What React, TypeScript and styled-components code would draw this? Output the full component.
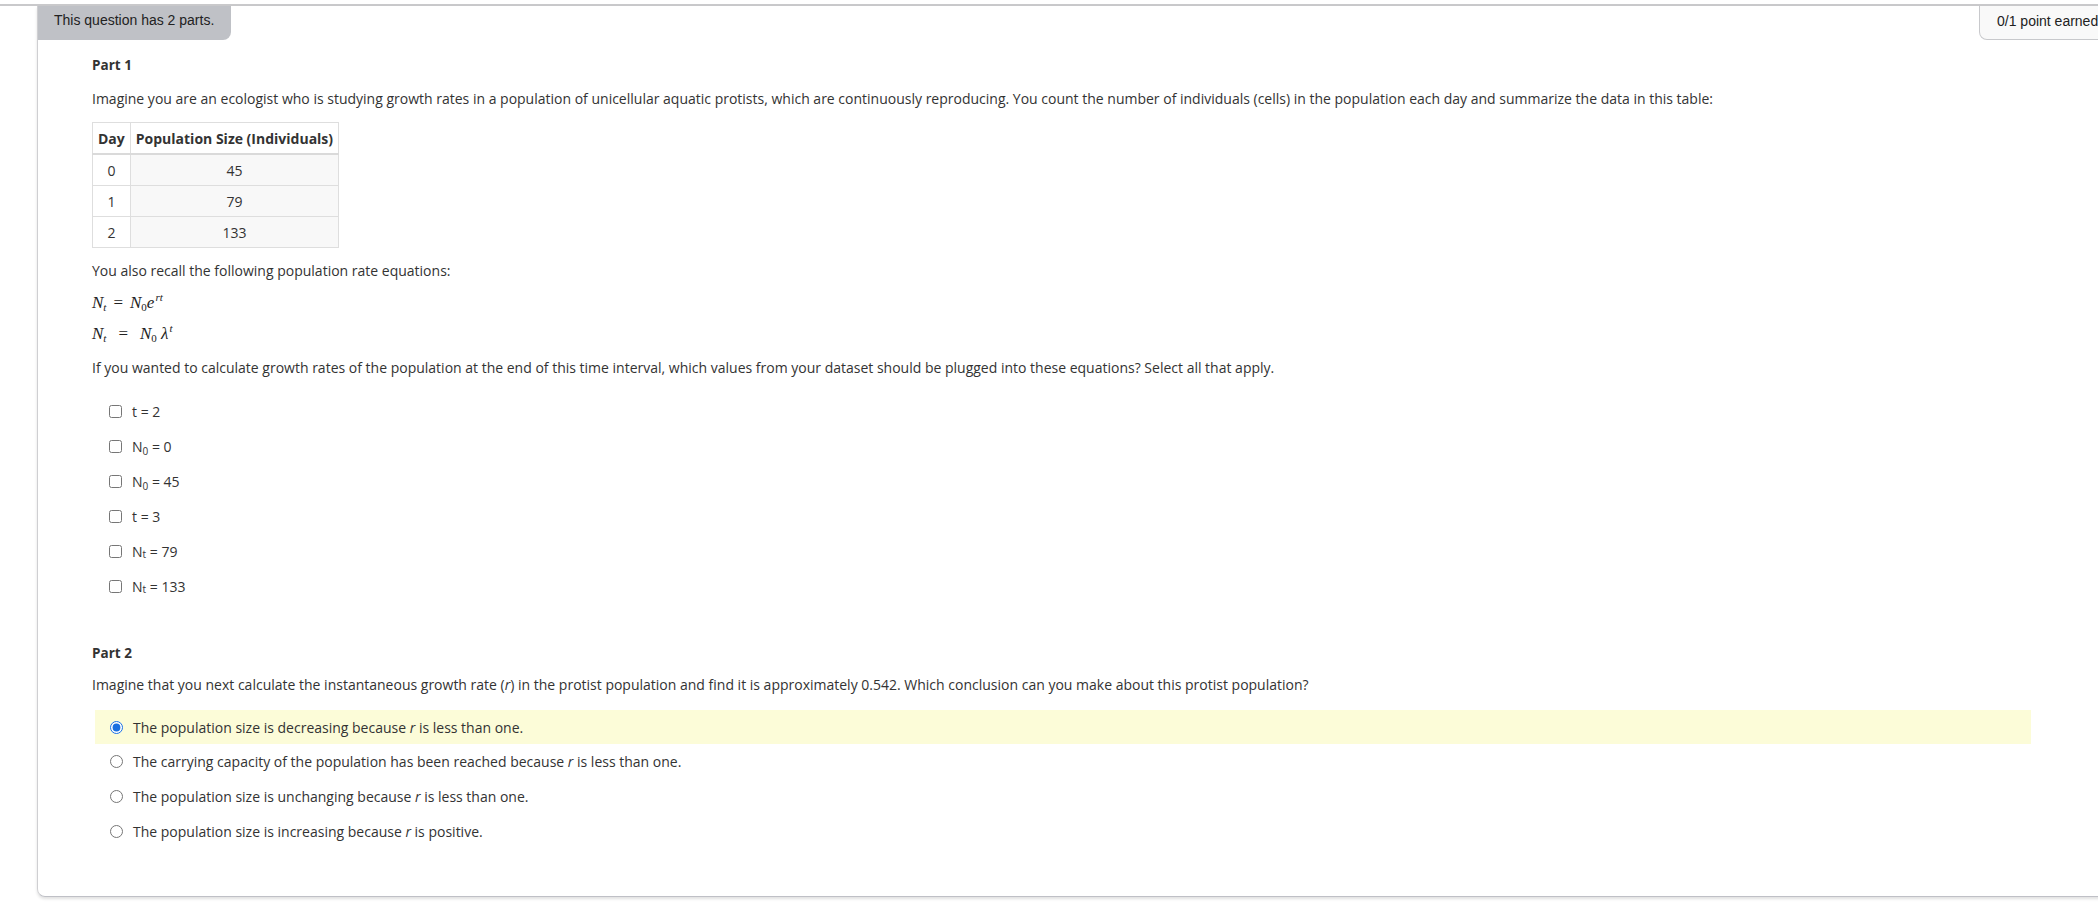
import React from "react";
import styled, { createGlobalStyle } from "styled-components";

const GlobalStyle = createGlobalStyle`
  html, body {
    margin: 0;
    padding: 0;
    background: #ffffff;
    overflow: hidden;
  }
  body {
    font-family: "Open Sans", "Liberation Sans", Arial, sans-serif;
    color: #333333;
  }
`;

const Page = styled.div`
  padding-top: 4px;
  width: 2098px;
  height: 902px;
  overflow: hidden;
  box-sizing: border-box;
`;

const TopRule = styled.div`
  border-top: 2px solid #c9c9cb;
`;

const Card = styled.div`
  margin-left: 37px;
  width: 2075px;
  box-sizing: border-box;
  border-left: 1px solid #cfcfd2;
  border-right: 1px solid #cfcfd2;
  border-bottom: 1px solid #bfc0c6;
  border-bottom-left-radius: 8px;
  border-bottom-right-radius: 8px;
  box-shadow: 0 2px 3px rgba(0, 0, 0, 0.12);
  padding-bottom: 48px;
`;

const CardHeader = styled.div`
  display: flex;
  justify-content: space-between;
  align-items: flex-start;
`;

const PartsTab = styled.div`
  background: #bfc1c6;
  color: #222;
  font-family: "Liberation Sans", Arial, sans-serif;
  font-size: 14px;
  height: 34px;
  line-height: 28px;
  padding: 0 16px;
  width: 193px;
  box-sizing: border-box;
  border-bottom-right-radius: 8px;
  white-space: nowrap;
`;

const PointsTab = styled.div`
  background: #f9f9f9;
  color: #222;
  font-family: "Liberation Sans", Arial, sans-serif;
  font-size: 14px;
  height: 34px;
  line-height: 30px;
  padding: 0 17px;
  box-sizing: border-box;
  border: 1px solid #c8c9cc;
  border-top: none;
  border-bottom-left-radius: 8px;
  width: 132px;
  white-space: nowrap;
  overflow: hidden;
`;

const Body = styled.div`
  padding: 0 80px 0 54px;
`;

const PartTitle = styled.h3<{ $top: number }>`
  margin: ${(p) => p.$top}px 0 0;
  font-size: 13.5px;
  font-weight: 700;
  line-height: 20px;
  color: #333;
`;

const Para = styled.p<{ $top: number }>`
  margin: ${(p) => p.$top}px 0 0;
  font-size: 14px;
  line-height: 20px;
  color: #333;
`;

const Table = styled.table`
  margin-top: 13px;
  border-collapse: collapse;
  font-size: 14px;
  color: #333;
`;

const HeadCell = styled.th`
  border: 1px solid #dedede;
  border-bottom: 2px solid #dadada;
  height: 30px;
  padding: 0 5px;
  font-weight: 700;
  text-align: center;
  background: #fff;
`;

const Cell = styled.td<{ $shade?: boolean }>`
  border: 1px solid #dedede;
  height: 30px;
  padding: 0 5px;
  text-align: center;
  background: ${(p) => (p.$shade ? "#f8f8f8" : "#ffffff")};
`;

const Equation = styled.div<{ $top: number }>`
  margin-top: ${(p) => p.$top}px;
  font-family: "Liberation Serif", "Times New Roman", serif;
  font-size: 17px;
  line-height: 20px;
  color: #222;
`;

const MathVar = styled.i`
  font-style: italic;
`;

const MathSub = styled.sub<{ $italic?: boolean }>`
  font-size: 11px;
  font-style: ${(p) => (p.$italic ? "italic" : "normal")};
  vertical-align: -3px;
  line-height: 0;
`;

const MathSup = styled.sup`
  font-size: 11px;
  font-style: italic;
  vertical-align: 7px;
  line-height: 0;
  padding-left: 1px;
`;

const Op = styled.span<{ $gap: number }>`
  padding: 0 ${(p) => p.$gap}px;
`;

const OptionList = styled.div<{ $top: number; $gap: number }>`
  margin-top: ${(p) => p.$top}px;
  display: flex;
  flex-direction: column;
  gap: ${(p) => p.$gap}px;
`;

const CheckRow = styled.label`
  display: flex;
  align-items: center;
  height: 20px;
  padding-left: 17px;
  font-size: 14px;
  color: #333;
`;

const RadioRow = styled.label<{ $selected?: boolean }>`
  display: flex;
  align-items: center;
  height: 34px;
  margin-left: 3px;
  padding-left: 15px;
  font-size: 14px;
  color: #333;
  background: ${(p) => (p.$selected ? "#fcfcd8" : "transparent")};
`;

const Check = styled.input`
  margin: 0 10px 0 0;
  width: 13px;
  height: 13px;
`;

const Radio = styled.input`
  margin: 0 10px 0 0;
  width: 13px;
  height: 13px;
  accent-color: #1a6fe0;
`;

const Sub = styled.sub`
  font-size: 10px;
  vertical-align: -3px;
  line-height: 0;
`;

const SmallT = styled.span`
  font-size: 10px;
  vertical-align: -1px;
`;

const Em = styled.i`
  font-style: italic;
`;

const rows = [
  { day: "0", size: "45" },
  { day: "1", size: "79" },
  { day: "2", size: "133" },
];

const checks: React.ReactNode[] = [
  <>t = 2</>,
  <>
    N<Sub>0</Sub> = 0
  </>,
  <>
    N<Sub>0</Sub> = 45
  </>,
  <>t = 3</>,
  <>
    N<SmallT>t</SmallT> = 79
  </>,
  <>
    N<SmallT>t</SmallT> = 133
  </>,
];

const choices: React.ReactNode[] = [
  <>
    The population size is decreasing because <Em>r</Em> is less than one.
  </>,
  <>
    The carrying capacity of the population has been reached because <Em>r</Em> is less than one.
  </>,
  <>
    The population size is unchanging because <Em>r</Em> is less than one.
  </>,
  <>
    The population size is increasing because <Em>r</Em> is positive.
  </>,
];

export default function App() {
  return (
    <>
      <GlobalStyle />
      <Page>
        <TopRule />
        <Card>
          <CardHeader>
            <PartsTab>This question has 2 parts.</PartsTab>
            <PointsTab>0/1 point earned</PointsTab>
          </CardHeader>
          <Body>
            <PartTitle $top={15}>Part 1</PartTitle>
            <Para $top={14}>
              Imagine you are an ecologist who is studying growth rates in a population of unicellular
              aquatic protists, which are continuously reproducing. You count the number of individuals
              (cells) in the population each day and summarize the data in this table:
            </Para>
            <Table>
              <thead>
                <tr>
                  <HeadCell>Day</HeadCell>
                  <HeadCell>Population Size (Individuals)</HeadCell>
                </tr>
              </thead>
              <tbody>
                {rows.map((r) => (
                  <tr key={r.day}>
                    <Cell>{r.day}</Cell>
                    <Cell $shade>{r.size}</Cell>
                  </tr>
                ))}
              </tbody>
            </Table>
            <Para $top={13}>You also recall the following population rate equations:</Para>
            <Equation $top={12}>
              <MathVar>N</MathVar>
              <MathSub $italic>t</MathSub>
              <Op $gap={7}>=</Op>
              <MathVar>N</MathVar>
              <MathSub>0</MathSub>
              <MathVar>e</MathVar>
              <MathSup>rt</MathSup>
            </Equation>
            <Equation $top={11}>
              <MathVar>N</MathVar>
              <MathSub $italic>t</MathSub>
              <Op $gap={12}>=</Op>
              <MathVar>N</MathVar>
              <MathSub>0</MathSub> <MathVar>λ</MathVar>
              <MathSup>t</MathSup>
            </Equation>
            <Para $top={14}>
              If you wanted to calculate growth rates of the population at the end of this time interval,
              which values from your dataset should be plugged into these equations? Select all that apply.
            </Para>
            <OptionList $top={23} $gap={15}>
              {checks.map((c, i) => (
                <CheckRow key={i}>
                  <Check type="checkbox" />
                  <span>{c}</span>
                </CheckRow>
              ))}
            </OptionList>
            <PartTitle $top={47}>Part 2</PartTitle>
            <Para $top={12}>
              Imagine that you next calculate the instantaneous growth rate (<Em>r</Em>) in the protist
              population and find it is approximately 0.542. Which conclusion can you make about this
              protist population?
            </Para>
            <OptionList $top={15} $gap={0.7}>
              {choices.map((c, i) => (
                <RadioRow key={i} $selected={i === 0}>
                  <Radio type="radio" name="part2" defaultChecked={i === 0} />
                  <span>{c}</span>
                </RadioRow>
              ))}
            </OptionList>
          </Body>
        </Card>
      </Page>
    </>
  );
}
